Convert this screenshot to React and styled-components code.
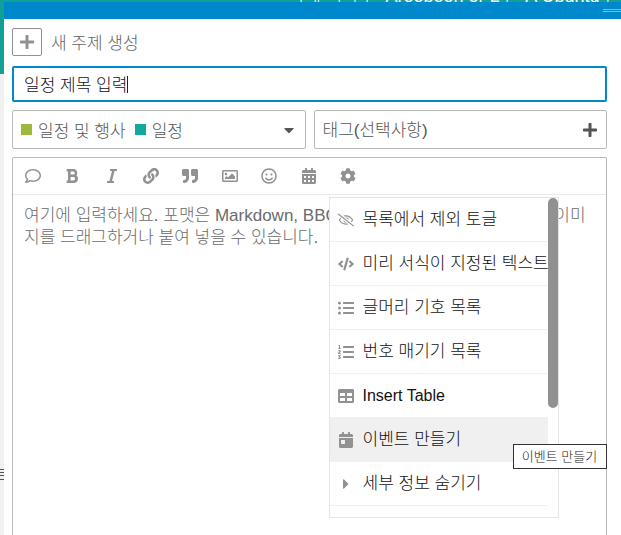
import React, { useState } from "react";
import styled, { createGlobalStyle } from "styled-components";
import {
  FaBold,
  FaCalendarAlt,
  FaCalendarDay,
  FaCaretDown,
  FaCaretRight,
  FaCode,
  FaCog,
  FaItalic,
  FaLink,
  FaListOl,
  FaListUl,
  FaPlus,
  FaQuoteRight,
  FaRegComment,
  FaRegEyeSlash,
  FaRegImage,
  FaRegSmile,
  FaTable,
} from "react-icons/fa";

const GlobalStyle = createGlobalStyle`
  * {
    box-sizing: border-box;
  }
  body {
    margin: 0;
    background: #fff;
    overflow: hidden;
  }
  body, button, input, select, textarea {
    font-family: "Liberation Sans", "Noto Sans CJK KR", sans-serif;
    font-size: 17px;
    font-weight: 300;
  }
`;

const Page = styled.div`
  height: 100vh;
  display: flex;
  flex-direction: column;
`;
const TopStrip = styled.header`
  height: 2px;
  flex: none;
  display: flex;
  justify-content: flex-end;
  align-items: flex-end;
  overflow: hidden;
  background: #12a096;
  color: #fff;
  font-size: 18px;
  white-space: nowrap;
  line-height: 12px;
`;
const Main = styled.div`
  flex: 1;
  min-height: 0;
  display: flex;
`;
const Gutter = styled.div`
  width: 4px;
  flex: none;
  display: flex;
  flex-direction: column;
  background: linear-gradient(#12a096 72px, #f0f0f0 72px);

  svg {
    margin-top: auto;
    margin-bottom: 55px;
  }
`;
const Composer = styled.main`
  flex: 1;
  min-width: 0;
  display: flex;
  flex-direction: column;
  background: #fff;
`;
const GripBar = styled.div`
  height: 17px;
  flex: none;
  display: flex;
  justify-content: flex-end;
  padding-top: 7px;
  background: #0088cc;
`;
const Grip = styled.span`
  width: 18px;
  height: 3px;
  border: solid #66c4f0;
  border-width: 1px 0;
`;
const Form = styled.form`
  flex: 1;
  min-height: 0;
  display: flex;
  flex-direction: column;
  gap: 8px;
  padding: 9px 14px 0 8px;
`;
const Heading = styled.div`
  display: flex;
  align-items: center;
  gap: 9px;
  margin-bottom: 2px;
`;
const HeadingText = styled.span`
  padding-top: 4px;
  color: #646464;
  line-height: 24px;
`;
const ActionButton = styled.button`
  width: 30px;
  height: 28px;
  display: flex;
  align-items: center;
  justify-content: center;
  padding: 0;
  border: 1px solid #919191;
  border-radius: 2px;
  background: #fff;
  color: #919191;
  font-size: 16px;
`;
const TitleField = styled.div`
  position: relative;
`;
const TitleInput = styled.input`
  display: block;
  width: 100%;
  height: 36px;
  padding: 0 10px 2px;
  border: 2px solid #0088cc;
  border-radius: 2px;
  outline: none;
  color: #111;
  caret-color: transparent;
`;
const Caret = styled.span`
  position: absolute;
  top: 10px;
  left: 115px;
  width: 1px;
  height: 17px;
  background: #222;
`;
const Choosers = styled.div`
  display: grid;
  grid-template-columns: 1fr 1fr;
  gap: 8px;
`;
const Chooser = styled.div`
  position: relative;
  height: 39px;
  display: flex;
  align-items: center;
  gap: 9px;
  padding: 0 8px;
  border: 1px solid #b9b9b9;
  border-radius: 2px;
  color: #555;

  > svg {
    margin-left: auto;
    font-size: 16px;
    pointer-events: none;
  }
`;
const Badge = styled.span`
  display: flex;
  align-items: center;
  gap: 6px;

  &::before {
    content: "";
    width: 11px;
    height: 11px;
    background: ${(props) => props.$color};
  }
`;
const CoverSelect = styled.select`
  position: absolute;
  inset: 0;
  width: 100%;
  opacity: 0;
`;
const TagSelect = styled.select`
  flex: 1;
  min-width: 0;
  height: 100%;
  padding: 2px 0 0;
  appearance: none;
  border: 0;
  outline: none;
  background: transparent;
  color: #555;
`;
const Editor = styled.div`
  flex: 1;
  min-height: 0;
  display: flex;
  flex-direction: column;
  border: 1px solid #b9b9b9;
  border-bottom: 0;
  border-radius: 2px 2px 0 0;
`;
const Toolbar = styled.div`
  height: 37px;
  flex: none;
  display: flex;
  border-bottom: 1px solid #e9e9e9;
`;
const Tools = styled.div`
  flex: 0 1 355px;
  display: flex;
`;
const ToolSlot = styled.div`
  position: relative;
  flex: 1;
  display: flex;
`;
const ToolButton = styled.button`
  flex: 1;
  display: flex;
  align-items: center;
  justify-content: center;
  padding: 0;
  border: 0;
  background: transparent;
  color: #919191;
  font-size: 16px;
`;
const Body = styled.textarea`
  flex: 1;
  display: block;
  width: 100%;
  padding: 10px 11px;
  border: 0;
  outline: none;
  resize: none;
  overflow: hidden;
  background: transparent;
  line-height: 22px;

  &::placeholder {
    color: #6b6b6b;
  }
`;
const Menu = styled.div`
  position: absolute;
  z-index: 1;
  top: 39px;
  left: 0;
  width: 230px;
  height: 321px;
  display: flex;
  border: 1px solid #e4e4e4;
  background: #fff;
`;
const MenuList = styled.ul`
  flex: 1;
  min-width: 0;
  margin: 0;
  padding: 0;
  list-style: none;
  overflow: hidden;
`;
const MenuItem = styled.li`
  height: 44px;
  display: flex;
  border-bottom: 1px solid #f0f0f0;
  background: ${(props) => (props.$active ? "#f0f0f0" : "#fff")};
`;
const MenuButton = styled.button`
  flex: 1;
  min-width: 0;
  display: flex;
  align-items: center;
  gap: 9px;
  padding: 0 0 0 8px;
  border: 0;
  background: transparent;
  color: #111;
  font-size: ${(props) => (props.$latin ? "16px" : "17px")};
  line-height: 22px;
  white-space: nowrap;

  svg {
    flex: none;
    width: 16px;
    height: 16px;
    color: #919191;
  }
`;
const ScrollThumb = styled.span`
  width: 10px;
  height: 210px;
  border-radius: 5px;
  background: #919191;
`;
const Tooltip = styled.span`
  position: absolute;
  z-index: 2;
  top: 246px;
  left: 183px;
  width: 94px;
  height: 25px;
  border: 1px solid #333;
  background: #fff;
  color: #222;
  font-size: 13px;
  line-height: 23px;
  text-align: center;
  white-space: nowrap;
`;

const tools = [
  { label: "댓글", Icon: FaRegComment },
  { label: "굵게", Icon: FaBold },
  { label: "기울임", Icon: FaItalic },
  { label: "링크", Icon: FaLink },
  { label: "인용", Icon: FaQuoteRight },
  { label: "이미지", Icon: FaRegImage },
  { label: "이모지", Icon: FaRegSmile },
  { label: "날짜", Icon: FaCalendarAlt },
];

const options = [
  { text: "목록에서 제외 토글", Icon: FaRegEyeSlash },
  { text: "미리 서식이 지정된 텍스트", Icon: FaCode },
  { text: "글머리 기호 목록", Icon: FaListUl },
  { text: "번호 매기기 목록", Icon: FaListOl },
  { text: "Insert Table", Icon: FaTable, latin: true },
  { text: "이벤트 만들기", Icon: FaCalendarDay, active: true },
  { text: "세부 정보 숨기기", Icon: FaCaretRight },
];

const OptionsMenu = () => (
  <Menu>
    <MenuList>
      {options.map(({ text, Icon, latin, active }) => (
        <MenuItem key={text} $active={active}>
          <MenuButton type="button" $latin={latin}>
            <Icon />
            {text}
          </MenuButton>
        </MenuItem>
      ))}
    </MenuList>
    <ScrollThumb />
    <Tooltip role="tooltip">이벤트 만들기</Tooltip>
  </Menu>
);

const App = () => {
  const [title, setTitle] = useState("일정 제목 입력");

  return (
    <Page>
      <GlobalStyle />
      <TopStrip>시에 최와 글 Arooboon or L 글 A Ubuntu 글</TopStrip>
      <Main>
        <Gutter>
          <svg width="4" height="11" fill="#555">
            <path d="M0 0h4v1H0zM0 3h4v1H0zM0 6h4v1H0zM0 10h4v1H0z" />
          </svg>
        </Gutter>
        <Composer>
          <GripBar>
            <Grip />
          </GripBar>
          <Form>
            <Heading>
              <ActionButton type="button" aria-label="새 주제 생성">
                <FaPlus />
              </ActionButton>
              <HeadingText>새 주제 생성</HeadingText>
            </Heading>
            <TitleField>
              <TitleInput aria-label="제목" value={title} onChange={(e) => setTitle(e.target.value)} />
              <Caret />
            </TitleField>
            <Choosers>
              <Chooser>
                <Badge $color="#9eb83b">일정 및 행사</Badge>
                <Badge $color="#12a89d">일정</Badge>
                <FaCaretDown />
                <CoverSelect aria-label="카테고리">
                  <option>일정</option>
                </CoverSelect>
              </Chooser>
              <Chooser>
                <TagSelect aria-label="태그">
                  <option>태그(선택사항)</option>
                </TagSelect>
                <FaPlus />
              </Chooser>
            </Choosers>
            <Editor>
              <Toolbar>
                <Tools>
                  {tools.map(({ label, Icon }) => (
                    <ToolSlot key={label}>
                      <ToolButton type="button" aria-label={label}>
                        <Icon />
                      </ToolButton>
                    </ToolSlot>
                  ))}
                  <ToolSlot>
                    <ToolButton type="button" aria-label="옵션" aria-expanded="true">
                      <FaCog />
                    </ToolButton>
                    <OptionsMenu />
                  </ToolSlot>
                </Tools>
              </Toolbar>
              <Body
                aria-label="본문"
                placeholder="여기에 입력하세요. 포맷은 Markdown, BBCode, HTML 등이 가능 합니다. 이미지를 드래그하거나 붙여 넣을 수 있습니다."
              />
            </Editor>
          </Form>
        </Composer>
      </Main>
    </Page>
  );
};

export default App;
